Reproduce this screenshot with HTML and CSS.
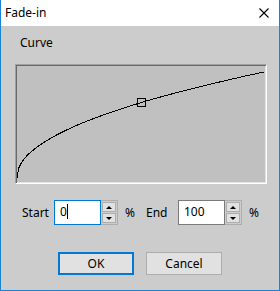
FILE: index.html
```html
<!DOCTYPE html>
<html lang="en">
<head>
    <meta charset="UTF-8">
    <meta name="viewport" content="width=device-width, initial-scale=1.0">
    <title>Fade-in</title>
    <link rel="stylesheet" href="styles.css">
</head>
<body>
    <div class="window">
        <div class="titlebar">
            <span class="title">Fade-in</span>
            <svg class="close" width="10" height="10" viewBox="0 0 10 10">
                <path d="M0.5 0.5 L9.5 9.5 M9.5 0.5 L0.5 9.5" stroke="#000" stroke-width="1.1" fill="none"/>
            </svg>
        </div>

        <div class="content">
            <div class="group-label">Curve</div>

            <div class="graph">
                <svg width="248" height="116" viewBox="0 0 248 116">
                    <polyline fill="none" stroke="#000" stroke-width="1" shape-rendering="crispEdges"
                        points="0.5,112 1,106 1.5,103 2,101.6 3,99.5 4,97.6 6,94.5 8,92.1 11,88.5 15,85.1 20,81.2 25,77.6 32,73.3 40,68.7 50,63.8 60,59.25 70,55.1 80,51.25 90,47.7 100,44.2 112,40.4 124,36.6 137,32.8 150,29.2 165,25.3 180,21.4 195,17.8 210,14.2 228,10.1 247,6"/>
                    <rect x="120.5" y="32.5" width="8" height="8" fill="none" stroke="#000" stroke-width="1"/>
                </svg>
            </div>

            <div class="range-row">
                <label class="field-label">Start</label>
                <div class="spin-field">
                    <div class="spin-input focused">0<span class="caret"></span></div>
                    <div class="spin-buttons">
                        <span class="spin-btn"><span class="arrow-up"></span></span>
                        <span class="spin-btn"><span class="arrow-down"></span></span>
                    </div>
                </div>
                <span class="unit">%</span>

                <label class="field-label end-label">End</label>
                <div class="spin-field">
                    <div class="spin-input">100</div>
                    <div class="spin-buttons">
                        <span class="spin-btn"><span class="arrow-up"></span></span>
                        <span class="spin-btn"><span class="arrow-down"></span></span>
                    </div>
                </div>
                <span class="unit">%</span>
            </div>

            <div class="button-row">
                <button class="btn default">OK</button>
                <button class="btn">Cancel</button>
            </div>
        </div>
    </div>
</body>
</html>
```

FILE: styles.css
```css
body {
    margin: 0;
    font-family: "Noto Sans", "Liberation Sans", sans-serif;
    font-size: 12px;
    color: #000;
}

.window {
    width: 280px;
    height: 291px;
    box-sizing: border-box;
    border: 1px solid #1883d7;
    border-top: none;
    background-color: #cccccc;
}

.titlebar {
    height: 26px;
    background-color: #fff;
    display: flex;
    align-items: center;
    justify-content: space-between;
    padding: 0 10px 0 4px;
}

.title {
    font-size: 12px;
    line-height: 16px;
}

.content {
    padding: 0 13px 0 14px;
}

.group-label {
    margin-top: 9px;
    padding-left: 5px;
    line-height: 16px;
}

.graph {
    margin-top: 13px;
    width: 252px;
    height: 120px;
    box-sizing: border-box;
    background-color: #c0c0c0;
    border: 1px solid;
    border-color: #a0a0a0 #ffffff #ffffff #a0a0a0;
    box-shadow: inset 1px 1px 0 #696969, inset -1px -1px 0 #e3e3e3;
    padding: 1px;
}

.graph svg {
    display: block;
}

.range-row {
    margin-top: 16px;
    margin-left: 7px;
    display: flex;
    align-items: center;
    height: 25px;
}

.field-label {
    width: 32px;
}

.end-label {
    margin-left: 11px;
}

.spin-field {
    display: flex;
    height: 25px;
}

.spin-input {
    width: 47px;
    height: 25px;
    box-sizing: border-box;
    border: 1px solid #7a7a7a;
    background: #fff;
    padding: 0 0 2px 5px;
    display: flex;
    align-items: center;
}

.spin-input.focused {
    border-color: #0078d7;
}

.caret {
    width: 1px;
    height: 15px;
    margin-left: 0;
    background: #000;
}

.spin-buttons {
    width: 17px;
    height: 25px;
    box-sizing: border-box;
    border: 1px solid #adadad;
    border-left: none;
    background: #cccccc;
    padding: 1px;
    display: flex;
    flex-direction: column;
    gap: 1px;
}

.spin-btn {
    flex: 1;
    background: #e1e1e1;
    border: 1px solid #adadad;
    display: flex;
    align-items: center;
    justify-content: center;
}

.arrow-up,
.arrow-down {
    width: 0;
    height: 0;
    border-left: 3px solid transparent;
    border-right: 3px solid transparent;
}

.arrow-up {
    border-bottom: 3px solid #000;
}

.arrow-down {
    border-top: 3px solid #000;
}

.unit {
    margin-left: 7px;
    width: 10px;
}

.button-row {
    margin-top: 27px;
    display: flex;
    gap: 12px;
    padding-left: 43px;
}

.btn {
    width: 76px;
    height: 23px;
    box-sizing: border-box;
    background: #e1e1e1;
    border: 1px solid #adadad;
    font-family: inherit;
    font-size: 12px;
    padding: 0;
}

.btn.default {
    border: 2px solid #0078d7;
}
```
